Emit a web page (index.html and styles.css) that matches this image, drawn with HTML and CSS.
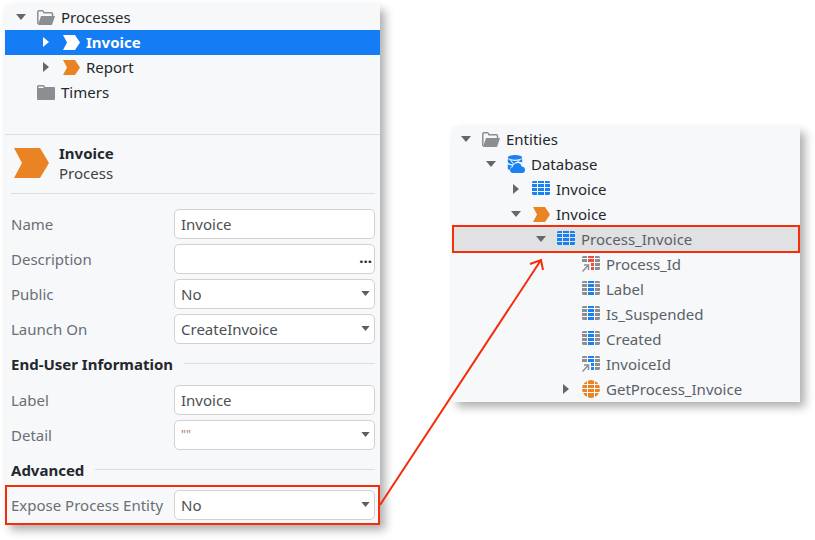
FILE: index.html
```html
<!DOCTYPE html>
<html lang="en">
<head>
<meta charset="utf-8">
<title>Expose Process Entity</title>
<link rel="stylesheet" href="styles.css">
</head>
<body>
<svg class="defs" aria-hidden="true">
  <symbol id="down" viewBox="0 0 10 6"><path d="M0 0H10L5 6Z"/></symbol>
  <symbol id="right" viewBox="0 0 10 10"><path d="M2 0L8 5L2 10Z"/></symbol>
  <symbol id="process" viewBox="0 -2 18 18"><path d="M1 0H13L18 7.500L13 15H1L5 7.500Z"/></symbol>
  <symbol id="folder-open" viewBox="0 -2 18 18">
    <path d="M.8 14V2.200Q.8 .8 2 .8H5.500Q6.500 .8 7 2.800H14.500Q15.500 2.800 15.500 4V6" fill="none" stroke="#8b8e92" stroke-width="1.500"/>
    <path d="M4 6H18L15 15H1Z"/>
  </symbol>
  <symbol id="folder" viewBox="0 -2 18 18">
    <path d="M0 1.500Q0 0 1.500 0H6Q7.500 0 8.200 2H17Q18 2 18 3.200V14Q18 15 17 15H1Q0 15 0 14Z"/>
    <path d="M1.500 3V1.500H6.200L6.800 3Z" fill="#f6f8fa"/>
  </symbol>
  <symbol id="table" viewBox="0 -1 18 18">
    <path d="M1 0H5V2H0V1ZM6 0H12V2H6ZM13 0H17L18 1V2H13ZM0 3H5V6H0ZM6 3H12V6H6ZM13 3H18V6H13ZM0 7H5V10H0ZM6 7H12V10H6ZM13 7H18V10H13ZM0 11H5V14H1L0 13ZM6 11H12V14H6ZM13 11H18V13L17 14H13Z"/>
  </symbol>
  <symbol id="attribute" viewBox="0 -1 18 18">
    <path fill="#8b8e92" d="M1 0H5V2H0V1ZM13 0H17L18 1V2H13ZM0 3H5V6H0ZM13 3H18V6H13ZM0 7H5V10H0ZM13 7H18V10H13ZM0 11H5V14H1L0 13ZM13 11H18V13L17 14H13Z"/>
    <path d="M6 0H12V2H6ZM6 3H12V6H6ZM6 7H12V10H6ZM6 11H12V14H6Z"/>
  </symbol>
  <symbol id="reference" viewBox="0 -1 18 18">
    <path fill="#8b8e92" d="M1 0H5V2H0V1ZM13 0H17L18 1V2H13ZM0 3H5V6H0ZM13 3H18V6H13ZM13 7H18V10H13ZM13 11H18V13L17 14H13Z"/>
    <path d="M6 0H12V2H6ZM6 3H12V6H6ZM9 7H12V10H9ZM9 11H12V14H9Z"/>
    <path d="M.5 15.500L6 9.500M2 9H6.500V14" fill="none" stroke="#8b8e92" stroke-width="1.500"/>
  </symbol>
  <symbol id="globe" viewBox="0 0 18 18">
    <circle cx="9" cy="9" r="9"/>
    <path d="M0 4.500H18M0 8.500H18M0 12.500H18M5.500 0V18M12.500 0V18" stroke="#f6f8fa" stroke-width="1"/>
  </symbol>
  <symbol id="database" viewBox="0 0 18 18">
    <ellipse cx="8" cy="2.400" rx="7.200" ry="2.400"/>
    <path d="M.8 4Q4 6 8 6Q12 6 15.200 4V7.500Q12.500 6.500 10.500 6.500Q7.500 7 6.500 9.500Q3 9.200 .8 7.500Z"/>
    <path d="M.8 9.200Q3 10.600 5.500 10.800Q3 12 3 15Q1.200 14.600 .8 13.700Z"/>
    <path d="M6 18Q3 17.600 3 15Q3.200 12.300 5.700 12Q6.700 8 10.600 8Q14 8.200 14.600 11.600Q18 12 18 15Q18 17.700 15.200 18Z"/>
    <path d="M3.500 5L7 9.800M12.500 5L9 8.500" stroke="#f6f8fa" stroke-width="1"/>
  </symbol>
</svg>

<main class="stage">
  <section class="panel" aria-label="Process properties">
    <ul class="tree process-tree">
      <li class="row"><svg class="caret"><use href="#down"/></svg><svg class="icon gray"><use href="#folder-open"/></svg>Processes</li>
      <li class="row level-1 selected"><svg class="caret"><use href="#right"/></svg><svg class="icon"><use href="#process"/></svg>Invoice</li>
      <li class="row level-1"><svg class="caret"><use href="#right"/></svg><svg class="icon orange"><use href="#process"/></svg>Report</li>
      <li class="row"><span class="caret"></span><svg class="icon gray"><use href="#folder"/></svg>Timers</li>
    </ul>

    <header class="summary">
      <svg class="summary-icon orange" viewBox="0 0 35 30" aria-hidden="true"><path d="M0 0H26L35 15L26 30H0L8 15Z"/></svg>
      <div><h1>Invoice</h1><p>Process</p></div>
    </header>

    <form class="form">
      <div class="field"><label for="name">Name</label><span class="control"><input id="name" type="text" value="Invoice"></span></div>
      <div class="field"><label for="description">Description</label><span class="control"><input id="description" type="text"><button type="button" class="more" aria-label="Edit description">...</button></span></div>
      <div class="field"><label for="public">Public</label><span class="control"><select id="public"><option>No</option></select><svg class="arrow"><use href="#down"/></svg></span></div>
      <div class="field"><label for="launch">Launch On</label><span class="control"><select id="launch"><option>CreateInvoice</option></select><svg class="arrow"><use href="#down"/></svg></span></div>
      <h2>End-User Information</h2>
      <div class="field"><label for="label">Label</label><span class="control"><input id="label" type="text" value="Invoice"></span></div>
      <div class="field"><label for="detail">Detail</label><span class="control"><select id="detail" class="literal"><option>""</option></select><svg class="arrow"><use href="#down"/></svg></span></div>
      <h2>Advanced</h2>
      <div class="field marked"><label for="expose">Expose Process Entity</label><span class="control"><select id="expose"><option>No</option></select><svg class="arrow"><use href="#down"/></svg></span></div>
    </form>
  </section>

  <section class="panel entities" aria-label="Entities">
    <ul class="tree">
      <li class="row"><svg class="caret"><use href="#down"/></svg><svg class="icon gray"><use href="#folder-open"/></svg>Entities</li>
      <li class="row level-1"><svg class="caret"><use href="#down"/></svg><svg class="icon blue"><use href="#database"/></svg>Database</li>
      <li class="row level-2"><svg class="caret"><use href="#right"/></svg><svg class="icon blue"><use href="#table"/></svg>Invoice</li>
      <li class="row level-2"><svg class="caret"><use href="#down"/></svg><svg class="icon orange"><use href="#process"/></svg>Invoice</li>
      <li class="row level-3 muted highlighted"><svg class="caret"><use href="#down"/></svg><svg class="icon blue"><use href="#table"/></svg>Process_Invoice</li>
      <li class="row level-4 muted"><span class="caret"></span><svg class="icon red"><use href="#reference"/></svg>Process_Id</li>
      <li class="row level-4 muted"><span class="caret"></span><svg class="icon blue"><use href="#attribute"/></svg>Label</li>
      <li class="row level-4 muted"><span class="caret"></span><svg class="icon blue"><use href="#attribute"/></svg>Is_Suspended</li>
      <li class="row level-4 muted"><span class="caret"></span><svg class="icon blue"><use href="#attribute"/></svg>Created</li>
      <li class="row level-4 muted"><span class="caret"></span><svg class="icon blue"><use href="#reference"/></svg>InvoiceId</li>
      <li class="row level-4 muted"><svg class="caret"><use href="#right"/></svg><svg class="icon orange"><use href="#globe"/></svg>GetProcess_Invoice</li>
    </ul>
  </section>

  <svg class="link-arrow" viewBox="0 0 815 540" preserveAspectRatio="none" aria-hidden="true">
    <path d="M380 505L541 260M530 264L541 260L543 270"/>
  </svg>
</main>
</body>
</html>
```

FILE: styles.css
```css
* { box-sizing: border-box; }

body {
  margin: 0;
  background: #fff;
  color: #24282d;
  font: 15px/20px "Noto Sans", sans-serif;
}

h1, h2, p, ul { margin: 0; padding: 0; font-size: 15px; }

.defs { display: none; }

.stage {
  position: relative;
  display: grid;
  grid-template-columns: 375fr 348fr;
  column-gap: 72px;
  align-items: start;
  padding: 5px 15px 15px 5px;
}

.panel {
  min-width: 0;
  background: #f6f8fa;
  box-shadow: 5px 5px 9px rgba(0, 0, 0, .32);
}

.entities { margin-top: 122px; }

/* Trees */
.tree { list-style: none; }

.process-tree { padding-bottom: 29px; }

.row {
  --inset: 11px;
  --indent: 0px;
  display: flex;
  align-items: center;
  height: 25px;
  padding: 0 0 1px calc(var(--inset) + var(--indent));
  white-space: nowrap;
}

.entities .row { --inset: 9px; }

.level-1 { --indent: 25px; }
.level-2 { --indent: 50px; }
.level-3 { --indent: 75px; }
.level-4 { --indent: 100px; }

.caret {
  width: 10px;
  height: 10px;
  margin-right: 11px;
  fill: #62686e;
}

.icon {
  width: 18px;
  height: 18px;
  margin-right: 6px;
}

.gray { fill: #8b8e92; }
.orange { fill: #e98324; }
.blue { fill: #1a82f0; }
.red { fill: #ee4b3c; }
.muted { color: #5b6167; }

.selected {
  background: #147df5;
  color: #fff;
  font-weight: 700;
}

.selected .caret, .selected .icon { fill: #fff; }

.entities .highlighted {
  --inset: 7px;
  height: 28px;
  margin: -2px 0 -1px;
  padding-bottom: 0;
  border: 2px solid #f52d0a;
  background: #e0e1e2;
}

/* Header */
.summary {
  display: flex;
  align-items: center;
  gap: 10px;
  height: 59px;
  padding: 0 0 2px 9px;
  border-top: 1px solid #dcdfe2;
}

.summary-icon { width: 35px; height: 30px; }
.summary p { color: #3d4248; }

/* Form */
.form {
  margin: 0 5px 0 6px;
  padding-top: 12px;
  border-top: 1px solid #dcdfe2;
}

.field {
  display: flex;
  align-items: center;
  justify-content: space-between;
  height: 35px;
}

.field label { color: #6a6f75; white-space: nowrap; }

.control {
  position: relative;
  display: flex;
  width: 201px;
  height: 30px;
}

.control input, .control select {
  appearance: none;
  width: 100%;
  height: 30px;
  margin: 0;
  padding: 0 6px;
  border: 1px solid #cfd1d4;
  border-radius: 5px;
  background: #fff;
  color: #4b5056;
  font: inherit;
}

.control .literal { color: #b5796a; font-size: 12px; }

.arrow {
  position: absolute;
  top: 12px;
  right: 5px;
  width: 9px;
  height: 5px;
  fill: #5b6066;
  pointer-events: none;
}

.more {
  position: absolute;
  right: 3px;
  bottom: 7px;
  padding: 0;
  border: 0;
  background: none;
  color: #24282d;
  font: 700 15px/20px "Noto Sans", sans-serif;
}

h2 {
  display: flex;
  align-items: center;
  gap: 11px;
  height: 36px;
  padding-bottom: 1px;
  white-space: nowrap;
}

h2::after {
  content: "";
  flex: 1;
  height: 1px;
  background: #dcdfe2;
}

.marked {
  height: 40px;
  margin: -3px -5px 0 -6px;
  padding: 0 3px 0 4px;
  border: 2px solid #f52d0a;
}

.link-arrow {
  position: absolute;
  top: 0;
  left: 0;
  width: 100%;
  height: 540px;
  fill: none;
  stroke: #f52d0a;
  stroke-width: 2;
  pointer-events: none;
}

.link-arrow path { vector-effect: non-scaling-stroke; }
```
